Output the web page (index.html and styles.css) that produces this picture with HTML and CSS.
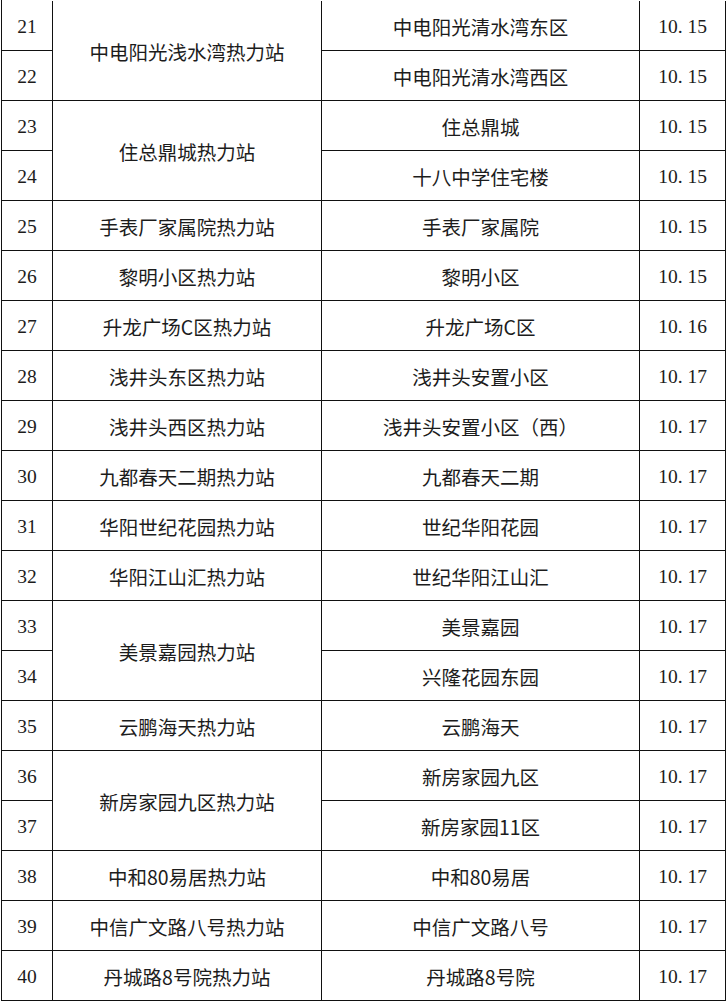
FILE: index.html
```html
<!DOCTYPE html>
<html lang="zh">
<head>
<meta charset="utf-8">
<link rel="stylesheet" href="styles.css">
</head>
<body>
<div class="table">
  <div class="c num">21</div><div class="c name span2">中电阳光浅水湾热力站</div><div class="c name">中电阳光清水湾东区</div><div class="c num">10<span class="p">.</span>15</div>
  <div class="c num">22</div><div class="c name">中电阳光清水湾西区</div><div class="c num">10<span class="p">.</span>15</div>
  <div class="c num">23</div><div class="c name span2">住总鼎城热力站</div><div class="c name">住总鼎城</div><div class="c num">10<span class="p">.</span>15</div>
  <div class="c num">24</div><div class="c name">十八中学住宅楼</div><div class="c num">10<span class="p">.</span>15</div>
  <div class="c num">25</div><div class="c name">手表厂家属院热力站</div><div class="c name">手表厂家属院</div><div class="c num">10<span class="p">.</span>15</div>
  <div class="c num">26</div><div class="c name">黎明小区热力站</div><div class="c name">黎明小区</div><div class="c num">10<span class="p">.</span>15</div>
  <div class="c num">27</div><div class="c name">升龙广场C区热力站</div><div class="c name">升龙广场C区</div><div class="c num">10<span class="p">.</span>16</div>
  <div class="c num">28</div><div class="c name">浅井头东区热力站</div><div class="c name">浅井头安置小区</div><div class="c num">10<span class="p">.</span>17</div>
  <div class="c num">29</div><div class="c name">浅井头西区热力站</div><div class="c name">浅井头安置小区（西）</div><div class="c num">10<span class="p">.</span>17</div>
  <div class="c num">30</div><div class="c name">九都春天二期热力站</div><div class="c name">九都春天二期</div><div class="c num">10<span class="p">.</span>17</div>
  <div class="c num">31</div><div class="c name">华阳世纪花园热力站</div><div class="c name">世纪华阳花园</div><div class="c num">10<span class="p">.</span>17</div>
  <div class="c num">32</div><div class="c name">华阳江山汇热力站</div><div class="c name">世纪华阳江山汇</div><div class="c num">10<span class="p">.</span>17</div>
  <div class="c num">33</div><div class="c name span2">美景嘉园热力站</div><div class="c name">美景嘉园</div><div class="c num">10<span class="p">.</span>17</div>
  <div class="c num">34</div><div class="c name">兴隆花园东园</div><div class="c num">10<span class="p">.</span>17</div>
  <div class="c num">35</div><div class="c name">云鹏海天热力站</div><div class="c name">云鹏海天</div><div class="c num">10<span class="p">.</span>17</div>
  <div class="c num">36</div><div class="c name span2">新房家园九区热力站</div><div class="c name">新房家园九区</div><div class="c num">10<span class="p">.</span>17</div>
  <div class="c num">37</div><div class="c name">新房家园11区</div><div class="c num">10<span class="p">.</span>17</div>
  <div class="c num">38</div><div class="c name">中和80易居热力站</div><div class="c name">中和80易居</div><div class="c num">10<span class="p">.</span>17</div>
  <div class="c num">39</div><div class="c name">中信广文路八号热力站</div><div class="c name">中信广文路八号</div><div class="c num">10<span class="p">.</span>17</div>
  <div class="c num">40</div><div class="c name">丹城路8号院热力站</div><div class="c name">丹城路8号院</div><div class="c num">10<span class="p">.</span>17</div>
</div>
</body>
</html>
```

FILE: styles.css
```css
html, body {
  margin: 0;
  padding: 0;
  background: #ffffff;
}

.table {
  display: grid;
  grid-template-columns: 51px 269px 318px 86px;
  grid-auto-rows: 50px;
  margin-left: 1px;
  padding-top: 1px;
  border-left: 1px solid #111;
  width: 724px;
  color: #1c1c1c;
}

.c {
  box-sizing: border-box;
  border-right: 1px solid #111;
  border-bottom: 1px solid #111;
  display: flex;
  align-items: center;
  justify-content: center;
  padding-top: 3px;
  font-size: 19.5px;
  line-height: 1;
  white-space: nowrap;
}

.span2 {
  grid-row: span 2;
}

.num {
  font-family: "Liberation Serif", "Noto Sans CJK SC", serif;
  font-size: 19.5px;
}

.name {
  font-family: "Noto Sans CJK SC", sans-serif;
  font-weight: 400;
}

.p {
  display: inline-block;
  width: 0.5em;
  text-align: left;
}
```
